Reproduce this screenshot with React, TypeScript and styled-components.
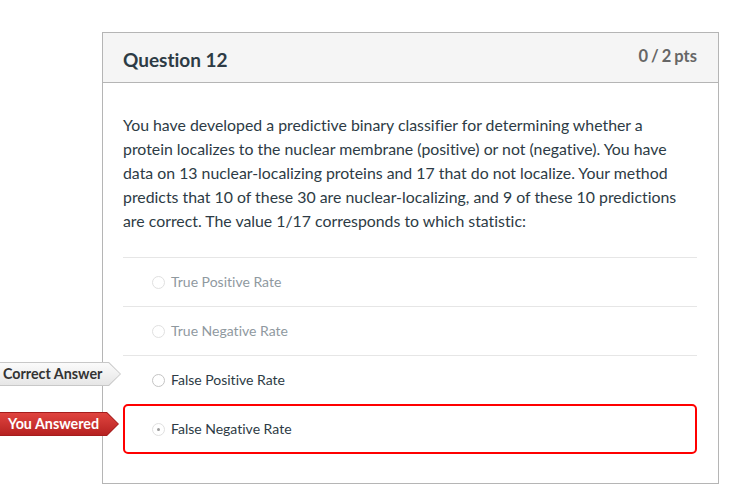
import React from "react";
import styled, { createGlobalStyle } from "styled-components";

const GlobalStyle = createGlobalStyle`
  html, body { margin: 0; padding: 0; background: #ffffff; }
  body {
    font-family: Lato, "Open Sans", "Liberation Sans", sans-serif;
    color: #2d3b45;
    font-variant-ligatures: no-common-ligatures;
  }
`;

const Page = styled.div`
  padding: 32px 0 0 102px;
  width: 742px;
  box-sizing: border-box;
`;

const Card = styled.div`
  width: 617px;
  box-sizing: border-box;
  border: 1px solid #b5b5b5;
`;

const Header = styled.div`
  display: flex;
  justify-content: space-between;
  align-items: flex-start;
  background: #f5f5f5;
  border-bottom: 1px solid #b5b5b5;
  height: 49px;
  padding: 0 21px 0 20px;
`;

const Title = styled.h2`
  margin: 15px 0 0;
  font-size: 19px;
  font-weight: 700;
  color: #2d3b45;
  line-height: 24px;
`;

const Points = styled.div`
  margin-top: 12px;
  font-size: 16.5px;
  font-weight: 700;
  color: #666666;
  line-height: 22px;
  word-spacing: -1px;
`;

const Body = styled.div`
  padding: 30px 21px 29px 20px;
`;

const Prompt = styled.p`
  margin: 0 0 24px;
  padding-right: 12px;
  font-size: 15.85px;
  line-height: 24px;
  color: #2d3b45;
`;

const Answers = styled.div`
  display: flex;
  flex-direction: column;
`;

type RowProps = { $selected?: boolean };

const Row = styled.div<RowProps>`
  position: relative;
  display: flex;
  align-items: center;
  gap: 6px;
  box-sizing: border-box;
  height: ${(p) => (p.$selected ? "50px" : "49px")};
  padding-left: ${(p) => (p.$selected ? "27px" : "29px")};
  border-top: 1px solid #e6e6e6;
  ${(p) =>
    p.$selected &&
    `
    border: 2px solid #ff0000;
    border-radius: 5px;
  `}
`;

const Radio = styled.span<{ $faded?: boolean; $checked?: boolean }>`
  position: relative;
  width: 13px;
  height: 13px;
  box-sizing: border-box;
  border-radius: 50%;
  border: 1px solid ${(p) => (p.$faded ? "#e0e0e0" : "#c4c4c4")};
  background: #fff;
  flex: none;
  ${(p) =>
    p.$checked &&
    `
    &::after {
      content: "";
      position: absolute;
      left: 4px;
      top: 4px;
      width: 3px;
      height: 3px;
      border-radius: 50%;
      background: #9a9a9a;
    }
  `}
`;

const AnswerText = styled.span<{ $faded?: boolean }>`
  font-size: 14px;
  line-height: 20px;
  color: ${(p) => (p.$faded ? "#8f999f" : "#2d3b45")};
`;

const Flag = styled.div<{ $variant: "correct" | "wrong"; $top: number; $width: number }>`
  position: absolute;
  left: ${(p) => (p.$variant === "wrong" ? "-125px" : "-123px")};
  top: ${(p) => p.$top}px;
  width: ${(p) => p.$width}px;
  height: 24px;
  clip-path: polygon(0 0, calc(100% - 12px) 0, 100% 50%, calc(100% - 12px) 100%, 0 100%);
  background: ${(p) => (p.$variant === "correct" ? "#c8c8c8" : "#a51d1d")};
`;

const FlagInner = styled.div<{ $variant: "correct" | "wrong" }>`
  position: absolute;
  inset: 1px 1px 1px 0;
  clip-path: polygon(0 0, calc(100% - 11.5px) 0, 100% 50%, calc(100% - 11.5px) 100%, 0 100%);
  background: ${(p) =>
    p.$variant === "correct"
      ? "linear-gradient(#fbfbfb, #e6e6e6)"
      : "linear-gradient(#e0443f, #b62221)"};
  color: ${(p) => (p.$variant === "correct" ? "#333333" : "#ffffff")};
  font-size: 14.3px;
  font-weight: 700;
  line-height: 22px;
  padding-left: ${(p) => (p.$variant === "correct" ? "3px" : "8px")};
  white-space: nowrap;
`;

export default function App() {
  return (
    <>
      <GlobalStyle />
      <Page>
        <Card>
          <Header>
            <Title>Question 12</Title>
            <Points>0 / 2 pts</Points>
          </Header>
          <Body>
            <Prompt>
              You have developed a predictive binary classifier for determining whether a
              protein localizes to the nuclear membrane (positive) or not (negative). You have
              data on 13 nuclear-localizing proteins and 17 that do not localize. Your method
              predicts that 10 of these 30 are nuclear-localizing, and 9 of these 10 predictions
              are correct. The value 1/17 corresponds to which statistic:
            </Prompt>
            <Answers>
              <Row>
                <Radio $faded />
                <AnswerText $faded>True Positive Rate</AnswerText>
              </Row>
              <Row>
                <Radio $faded />
                <AnswerText $faded>True Negative Rate</AnswerText>
              </Row>
              <Row>
                <Flag $variant="correct" $top={6} $width={121}>
                  <FlagInner $variant="correct">Correct Answer</FlagInner>
                </Flag>
                <Radio />
                <AnswerText>False Positive Rate</AnswerText>
              </Row>
              <Row $selected>
                <Flag $variant="wrong" $top={6} $width={119}>
                  <FlagInner $variant="wrong">You Answered</FlagInner>
                </Flag>
                <Radio $faded $checked />
                <AnswerText>False Negative Rate</AnswerText>
              </Row>
            </Answers>
          </Body>
        </Card>
      </Page>
    </>
  );
}
